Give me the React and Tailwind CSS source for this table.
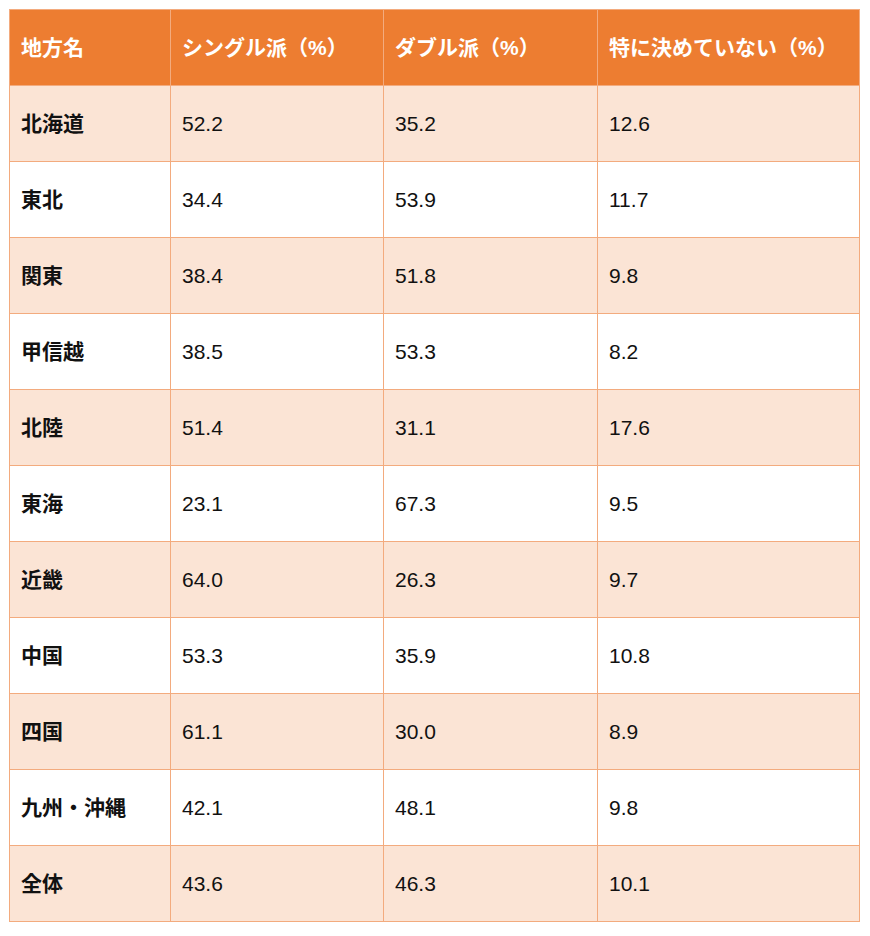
import React from 'react';

const rows = [
  ['北海道', '52.2', '35.2', '12.6'],
  ['東北', '34.4', '53.9', '11.7'],
  ['関東', '38.4', '51.8', '9.8'],
  ['甲信越', '38.5', '53.3', '8.2'],
  ['北陸', '51.4', '31.1', '17.6'],
  ['東海', '23.1', '67.3', '9.5'],
  ['近畿', '64.0', '26.3', '9.7'],
  ['中国', '53.3', '35.9', '10.8'],
  ['四国', '61.1', '30.0', '8.9'],
  ['九州・沖縄', '42.1', '48.1', '9.8'],
  ['全体', '43.6', '46.3', '10.1'],
];

const headers = ['地方名', 'シングル派（%）', 'ダブル派（%）', '特に決めていない（%）'];

function App() {
  return (
    <div
      className="bg-white min-h-[936px] p-[9px]"
      style={{ fontFamily: '"Liberation Sans", "Noto Sans CJK JP", sans-serif' }}
    >
      <div className="w-[851px] border-l border-t border-[#f3ab7e] grid grid-cols-[161px_213px_214px_262px]">
        {headers.map((h) => (
          <div
            key={h}
            className="h-[76px] flex items-center pl-[11px] bg-[#ed7d31] border-r border-b border-[#f3ab7e] text-white font-bold text-[21px]"
          >
            {h}
          </div>
        ))}
        {rows.map((r, i) =>
          r.map((cell, j) => (
            <div
              key={i + '-' + j}
              className={
                'h-[76px] flex items-center pl-[11px] border-r border-b border-[#f3ab7e] text-[#111] text-[21px] ' +
                (i % 2 === 0 ? 'bg-[#fbe4d5] ' : 'bg-white ') +
                (j === 0 ? 'font-bold' : 'font-normal')
              }
            >
              {cell}
            </div>
          ))
        )}
      </div>
    </div>
  );
}

export default App;
